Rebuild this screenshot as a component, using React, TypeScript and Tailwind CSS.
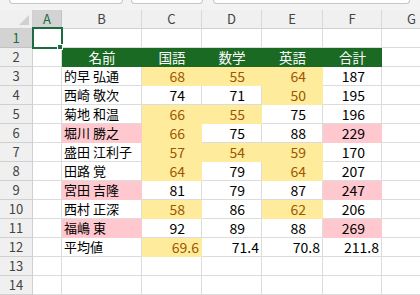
import React from 'react';

type Fill = 'y' | 'p' | undefined;
type Cell = { v: string; f?: Fill };

const cols = [
  { key: 'A', w: 'w-[29px]' },
  { key: 'B', w: 'w-[80px]' },
  { key: 'C', w: 'w-[60px]' },
  { key: 'D', w: 'w-[60px]' },
  { key: 'E', w: 'w-[61px]' },
  { key: 'F', w: 'w-[59px]' },
  { key: 'G', w: 'w-[60px]' },
];

const rows: { name: string; nf?: Fill; nums: Cell[]; avg?: boolean }[] = [
  { name: '的早 弘通', nums: [{ v: '68', f: 'y' }, { v: '55', f: 'y' }, { v: '64', f: 'y' }, { v: '187' }] },
  { name: '西崎 敬次', nums: [{ v: '74' }, { v: '71' }, { v: '50', f: 'y' }, { v: '195' }] },
  { name: '菊地 和温', nums: [{ v: '66', f: 'y' }, { v: '55', f: 'y' }, { v: '75' }, { v: '196' }] },
  { name: '堀川 勝之', nf: 'p', nums: [{ v: '66', f: 'y' }, { v: '75' }, { v: '88' }, { v: '229', f: 'p' }] },
  { name: '盛田 江利子', nums: [{ v: '57', f: 'y' }, { v: '54', f: 'y' }, { v: '59', f: 'y' }, { v: '170' }] },
  { name: '田路 覚', nums: [{ v: '64', f: 'y' }, { v: '79' }, { v: '64', f: 'y' }, { v: '207' }] },
  { name: '宮田 吉隆', nf: 'p', nums: [{ v: '81' }, { v: '79' }, { v: '87' }, { v: '247', f: 'p' }] },
  { name: '西村 正深', nums: [{ v: '58', f: 'y' }, { v: '86' }, { v: '62', f: 'y' }, { v: '206' }] },
  { name: '福嶋 東', nf: 'p', nums: [{ v: '92' }, { v: '89' }, { v: '88' }, { v: '269', f: 'p' }] },
  { name: '平均値', avg: true, nums: [{ v: '69.6', f: 'y' }, { v: '71.4' }, { v: '70.8' }, { v: '211.8' }] },
];

const fillClass = (f: Fill) =>
  f === 'y'
    ? 'bg-[#ffeb9c] border-[#ffeb9c] text-[#9c5700]'
    : f === 'p'
    ? 'bg-[#ffc7ce] border-[#ffc7ce] text-black'
    : 'bg-white border-[#dcdcdc] text-black';

const RowHead = ({ n, active }: { n: number; active?: boolean }) => (
  <div
    className={
      'w-[33px] h-[19px] shrink-0 flex items-center justify-center border-b border-r text-[13px] ' +
      (active
        ? 'bg-[#d3d3d3] border-[#c2c2c2] text-[#1d6b41]'
        : 'bg-[#f0f0f0] border-[#d0d0d0] text-[#444]')
    }
  >
    {n}
  </div>
);

const Blank = ({ w }: { w: string }) => (
  <div className={w + ' h-[19px] shrink-0 bg-white border-r border-b border-[#dcdcdc]'} />
);

const App = () => {
  return (
    <div
      className="w-[420px] h-[295px] overflow-hidden bg-white"
      style={{ fontFamily: '"Noto Sans CJK JP", "Noto Sans", sans-serif' }}
    >
      {/* remains of the toolbar above */}
      <div className="h-[10px] flex bg-[#f3f3f3]">
        <div className="ml-[9px] w-[114px] h-[4px] bg-white border border-t-0 border-[#c6c6c6] rounded-b-[5px]" />
        <div className="ml-[8px] w-[72px] h-[4px] bg-white border border-t-0 border-[#c6c6c6] rounded-b-[5px]" />
        <div className="ml-[10px] w-[197px] h-[4px] bg-white border border-t-0 border-[#c6c6c6] rounded-b-[5px]" />
      </div>

      {/* column headers */}
      <div className="flex w-[500px]">
        <div className="relative w-[33px] h-[19px] shrink-0 bg-[#f0f0f0] border-r border-b border-[#d0d0d0]">
          <div className="absolute right-[3px] bottom-[3px] w-0 h-0 border-l-[10px] border-l-transparent border-b-[10px] border-b-[#d0d0d0]" />
        </div>
        {cols.map((c) => (
          <div
            key={c.key}
            className={
              c.w +
              ' h-[19px] shrink-0 flex items-center justify-center border-r text-[13px] ' +
              (c.key === 'A'
                ? 'bg-[#d3d3d3] border-[#c2c2c2] text-[#1d6b41] border-b-2 border-b-[#1d6b41]'
                : 'bg-[#f0f0f0] border-[#d8d8d8] text-[#444] border-b border-b-[#d0d0d0]')
            }
          >
            {c.key}
          </div>
        ))}
      </div>

      {/* row 1 */}
      <div className="flex w-[500px]">
        <RowHead n={1} active />
        <div className="relative w-[29px] h-[19px] shrink-0 bg-white border-r border-b border-[#dcdcdc]">
          <div className="absolute -left-[1px] -top-[2px] w-[31px] h-[22px] border-2 border-[#1d6b41]" />
          <div className="absolute -right-[2px] -bottom-[3px] w-[6px] h-[6px] bg-[#1d6b41] border border-white" />
        </div>
        {cols.slice(1).map((c) => (
          <Blank key={c.key} w={c.w} />
        ))}
      </div>

      {/* row 2 header */}
      <div className="flex w-[500px]">
        <RowHead n={2} />
        <Blank w="w-[29px]" />
        {['名前', '国語', '数学', '英語', '合計'].map((h, i) => (
          <div
            key={h}
            className={
              cols[i + 1].w +
              ' h-[19px] shrink-0 flex items-center justify-center bg-[#1b6a24] text-white text-[13.5px]'
            }
          >
            {h}
          </div>
        ))}
        <Blank w="w-[60px]" />
      </div>

      {rows.map((r, ri) => (
        <div key={r.name} className="flex w-[500px]">
          <RowHead n={ri + 3} />
          <Blank w="w-[29px]" />
          <div
            className={
              'w-[80px] h-[19px] shrink-0 flex items-center pl-[2px] border-r border-b text-[13px] whitespace-nowrap ' +
              fillClass(r.nf)
            }
          >
            {r.name}
          </div>
          {r.nums.map((n, ni) => (
            <div
              key={ni}
              className={
                cols[ni + 2].w +
                ' h-[19px] shrink-0 flex items-center justify-end border-r border-b text-[14px] ' +
                (r.avg ? 'pr-[2px] ' : 'pr-[16px] ') +
                fillClass(n.f)
              }
            >
              {n.v}
            </div>
          ))}
          <Blank w="w-[60px]" />
        </div>
      ))}

      {[13, 14].map((n) => (
        <div key={n} className="flex w-[500px]">
          <RowHead n={n} />
          {cols.map((c) => (
            <Blank key={c.key} w={c.w} />
          ))}
        </div>
      ))}
    </div>
  );
};

export default App;
